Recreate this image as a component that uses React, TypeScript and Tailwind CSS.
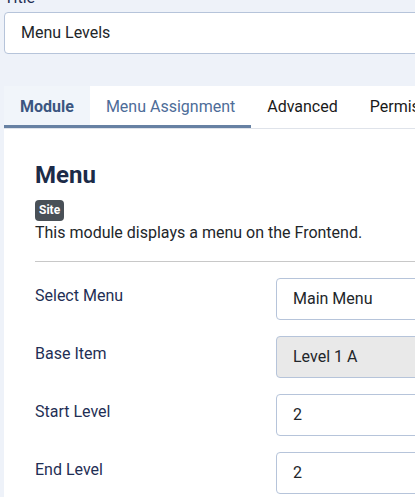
const rows = [
  { label: "Select Menu", value: "Main Menu", disabled: false },
  { label: "Base Item", value: "Level 1 A", disabled: true },
  { label: "Start Level", value: "2", disabled: false },
  { label: "End Level", value: "2", disabled: false },
];

const tabs = ["Module", "Menu Assignment", "Advanced", "Permissions"];

export default function App() {
  return (
    <div
      className="h-[497px] w-[415px] overflow-hidden bg-[#eef2f9] text-[#22262a]"
      style={{ fontFamily: "Roboto, 'Noto Sans', sans-serif" }}
    >
      <div className="w-[520px] pl-[4px]">
        <label className="-mt-[14px] mb-[2px] block text-[16px] leading-6 text-[#1f2f55]">
          Title
        </label>
        <div className="flex h-[42px] items-center rounded-[4px] border border-[#b6c4da] bg-white px-[16px] text-[16px]">
          Menu Levels
        </div>

        <div className="mt-[32px] bg-white">
          <div className="flex h-[43px] border-b border-[#dfe3ea]">
            {tabs.map((t, i) => (
              <div
                key={t}
                className={
                  i === 0
                    ? "flex items-center bg-[#f1f5fa] px-[16px] text-[16px] font-bold text-[#3b5680] shadow-[inset_0_-3px_0_#6781a3]"
                    : i === 1
                      ? "flex items-center px-[16px] text-[16px] text-[#4d6c98] shadow-[inset_0_-3px_0_#6781a3]"
                      : "flex items-center px-[16px] text-[16px] text-[#1a1a1a]"
                }
              >
                {t}
              </div>
            ))}
          </div>

          <div className="px-[31px] pb-[20px] pt-[32px]">
            <h2 className="text-[24px] font-bold leading-[1.2] text-[#1c2b48]">
              Menu
            </h2>
            <span className="mt-[10px] inline-block rounded-[4px] bg-[#495057] px-[4px] text-[12px] font-bold leading-[21px] text-white">
              Site
            </span>
            <p className="text-[16px] leading-6">
              This module displays a menu on the Frontend.
            </p>
            <hr className="mt-[16px] border-t border-[#c8c8c8]" />

            <div className="mt-[16px] flex flex-col gap-[16px]">
              {rows.map((r) => (
                <div key={r.label} className="flex">
                  <div className="w-[241px] shrink-0 pt-[6px] text-[16px] leading-6 text-[#1f2f55]">
                    {r.label}
                  </div>
                  <div
                    className={
                      r.disabled
                        ? "flex h-[42px] flex-1 items-center rounded-[4px] border border-[#b6c4da] bg-[#e9e9e9] px-[16px] text-[16px]"
                        : "flex h-[42px] flex-1 items-center rounded-[4px] border border-[#b6c4da] bg-white px-[16px] text-[16px]"
                    }
                  >
                    {r.value}
                  </div>
                </div>
              ))}
            </div>
          </div>
        </div>
      </div>
    </div>
  );
}
